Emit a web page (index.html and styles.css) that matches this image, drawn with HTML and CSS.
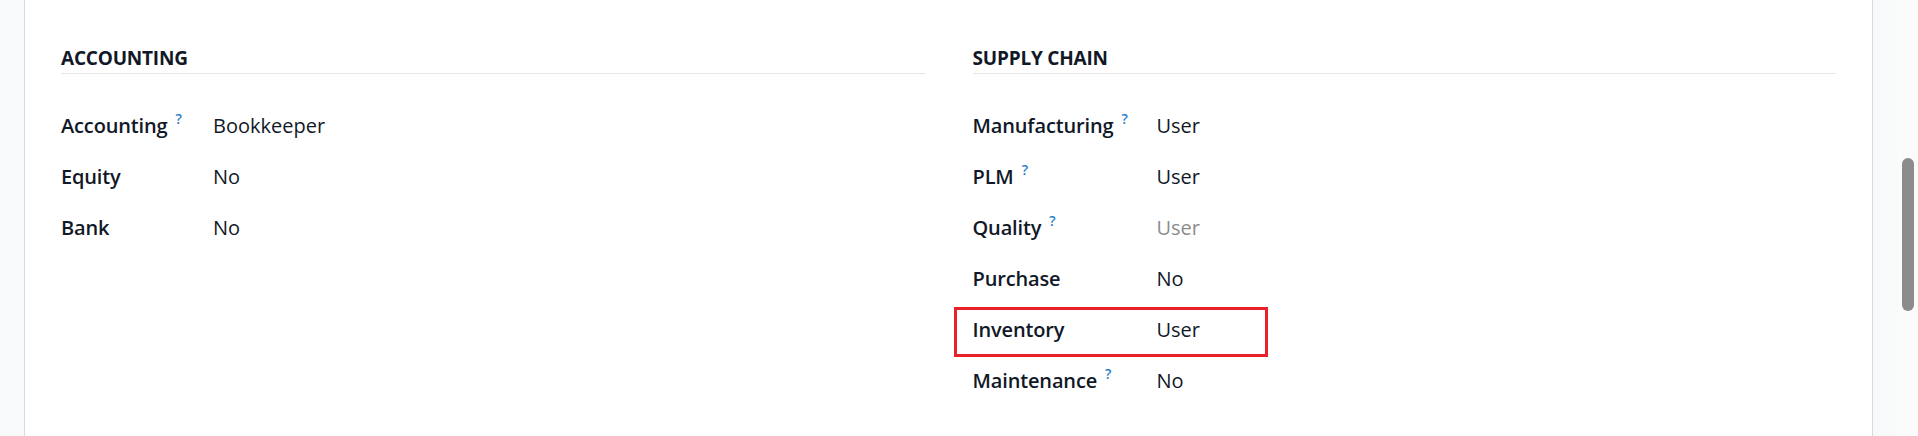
FILE: index.html
```html
<!DOCTYPE html>
<html>
<head>
  <title>User access rights</title>
  <link rel="stylesheet" href="styles.css">
</head>
<body>
  <div class="page">
    <div class="side-gap"></div>

    <div class="sheet">
      <div class="groups">
        <!-- left column -->
        <div class="group">
          <div class="separator">ACCOUNTING</div>
          <div class="fields fields-left">
            <div class="label">Accounting <sup class="help">?</sup></div>
            <div class="value">Bookkeeper</div>
            <div class="label">Equity</div>
            <div class="value">No</div>
            <div class="label">Bank</div>
            <div class="value">No</div>
          </div>
        </div>

        <!-- right column -->
        <div class="group">
          <div class="separator">SUPPLY CHAIN</div>
          <div class="fields fields-right">
            <div class="label">Manufacturing <sup class="help">?</sup></div>
            <div class="value">User</div>
            <div class="label">PLM <sup class="help">?</sup></div>
            <div class="value">User</div>
            <div class="label">Quality <sup class="help">?</sup></div>
            <div class="value muted">User</div>
            <div class="label">Purchase</div>
            <div class="value">No</div>
            <div class="label highlighted">Inventory <span class="highlight-box"></span></div>
            <div class="value">User</div>
            <div class="label">Maintenance <sup class="help">?</sup></div>
            <div class="value">No</div>
          </div>
        </div>
      </div>
    </div>

    <div class="side-right"></div>
    <div class="scroll-track">
      <div class="scroll-thumb"></div>
    </div>
  </div>
</body>
</html>
```

FILE: styles.css
```css
* {
  margin: 0;
  padding: 0;
  box-sizing: border-box;
}

html, body {
  height: 100%;
}

body {
  font-family: "Open Sans", "Noto Sans", sans-serif;
  background: #f8f9fa;
  color: #111827;
  overflow: hidden;
}

.page {
  display: flex;
  height: 100%;
}

.side-gap {
  width: 24px;
  flex-shrink: 0;
}

.sheet {
  width: 1849px;
  flex-shrink: 0;
  background: #fff;
  border-left: 1px solid #d8dadd;
  border-right: 1px solid #d8dadd;
  padding: 45px 36px 0 36px;
}

.side-right {
  width: 24px;
  flex-shrink: 0;
}

.scroll-track {
  width: 21px;
  flex-shrink: 0;
  background: #fbfbfb;
  padding: 158px 0 0 5px;
}

.scroll-thumb {
  width: 12px;
  height: 153px;
  border-radius: 6px;
  background: #8c8c8c;
}

.groups {
  display: grid;
  grid-template-columns: 1fr 1fr;
  column-gap: 48px;
}

.separator {
  font-size: 19px;
  font-weight: 700;
  letter-spacing: -0.2px;
  line-height: 26px;
  padding-bottom: 2px;
  border-bottom: 1.5px solid #e5e7eb;
}

.fields {
  display: grid;
  grid-auto-rows: 51px;
  align-items: center;
  margin-top: 26px;
  font-size: 20px;
  line-height: 30px;
}

.fields-left {
  grid-template-columns: 152px 1fr;
}

.fields-right {
  grid-template-columns: 184px 1fr;
}

.label {
  font-weight: 600;
  letter-spacing: -0.15px;
  white-space: nowrap;
}

.help {
  font-size: 14px;
  font-weight: 600;
  color: #2a7cc7;
  margin-left: 3px;
  vertical-align: 9px;
  line-height: 0;
}

.value.muted {
  color: #8c8c8c;
}

.highlighted {
  position: relative;
}

/* red annotation frame drawn over the Inventory row */
.highlight-box {
  position: absolute;
  left: -19px;
  top: -8px;
  width: 314px;
  height: 50px;
  border: 3px solid #e8202a;
  pointer-events: none;
}
```
